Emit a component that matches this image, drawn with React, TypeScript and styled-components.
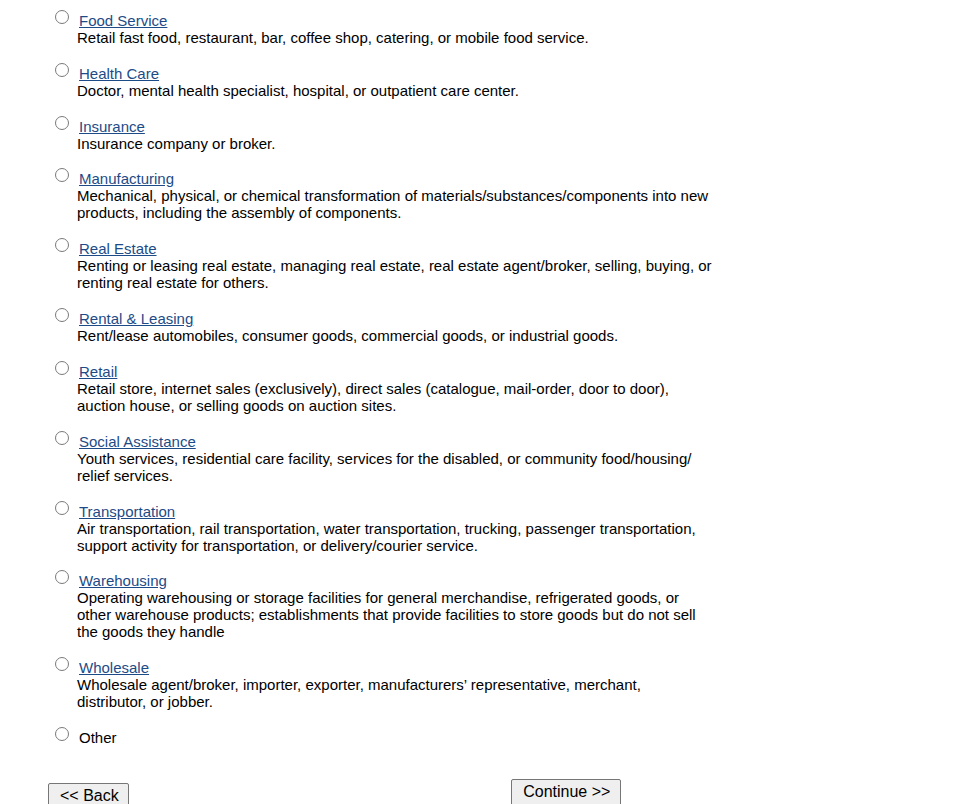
import React from "react";
import styled, { createGlobalStyle } from "styled-components";

const Global = createGlobalStyle`
  html, body { background: #fff; }
  body {
    margin: 8px;
    font-family: "Liberation Sans", Arial, sans-serif;
    font-size: 15px;
    color: #000;
  }
`;

const List = styled.div`
  display: flex;
  flex-direction: column;
  gap: 16.82px;
  padding: 2px 0 0 42px;
`;

const Item = styled.div`
  display: flex;
  flex-direction: column;
`;

const TitleRow = styled.label`
  display: flex;
  align-items: flex-start;
`;

const Radio = styled.input`
  appearance: none;
  -webkit-appearance: none;
  box-sizing: border-box;
  width: 14px;
  height: 14px;
  margin: 0 0 0 5px;
  flex: none;
  border: 1px solid #7a7a7a;
  border-radius: 50%;
  background: #fff;
`;

const Title = styled.a`
  margin-left: 10px;
  padding-top: 2px;
  line-height: 17px;
  color: #1d4b87;
  text-decoration: underline;
  cursor: pointer;
`;

const PlainTitle = styled.span`
  margin-left: 10px;
  padding-top: 2px;
  line-height: 17px;
`;

const Desc = styled.div`
  margin-left: 27px;
  width: 636px;
  line-height: 17px;
`;

const Buttons = styled.div`
  display: flex;
  align-items: flex-start;
  padding: 33px 0 0 40px;
`;

const Button = styled.button<{ $left: number; $top: number }>`
  margin-left: ${(p) => p.$left}px;
  margin-top: ${(p) => p.$top}px;
  font-family: "Liberation Sans", Arial, sans-serif;
  font-size: 16px;
  line-height: 18px;
  padding: 3px 9.5px 4px 11px;
  background: #efefef;
  color: #000;
  border: 1px solid #767676;
  border-radius: 2px;
`;

const items = [
  ["Food Service", "Retail fast food, restaurant, bar, coffee shop, catering, or mobile food service."],
  ["Health Care", "Doctor, mental health specialist, hospital, or outpatient care center."],
  ["Insurance", "Insurance company or broker."],
  ["Manufacturing", "Mechanical, physical, or chemical transformation of materials/substances/components into new products, including the assembly of components."],
  ["Real Estate", "Renting or leasing real estate, managing real estate, real estate agent/broker, selling, buying, or renting real estate for others."],
  ["Rental & Leasing", "Rent/lease automobiles, consumer goods, commercial goods, or industrial goods."],
  ["Retail", "Retail store, internet sales (exclusively), direct sales (catalogue, mail-order, door to door), auction house, or selling goods on auction sites."],
  ["Social Assistance", "Youth services, residential care facility, services for the disabled, or community food/housing/\u200Brelief services."],
  ["Transportation", "Air transportation, rail transportation, water transportation, trucking, passenger transportation, support activity for transportation, or delivery/courier service."],
  ["Warehousing", "Operating warehousing or storage facilities for general merchandise, refrigerated goods, or other warehouse products; establishments that provide facilities to store goods but do not sell the goods they handle"],
  ["Wholesale", "Wholesale agent/broker, importer, exporter, manufacturers\u2019 representative, merchant, distributor, or jobber."],
];

export default function App() {
  return (
    <>
      <Global />
      <List>
        {items.map(([t, d]) => (
          <Item key={t}>
            <TitleRow>
              <Radio type="radio" name="industry" />
              <Title>{t}</Title>
            </TitleRow>
            <Desc>{d}</Desc>
          </Item>
        ))}
        <Item>
          <TitleRow>
            <Radio type="radio" name="industry" />
            <PlainTitle>Other</PlainTitle>
          </TitleRow>
        </Item>
      </List>
      <Buttons>
        <Button $left={0} $top={4}>&lt;&lt; Back</Button>
        <Button $left={382} $top={0}>Continue &gt;&gt;</Button>
      </Buttons>
    </>
  );
}
